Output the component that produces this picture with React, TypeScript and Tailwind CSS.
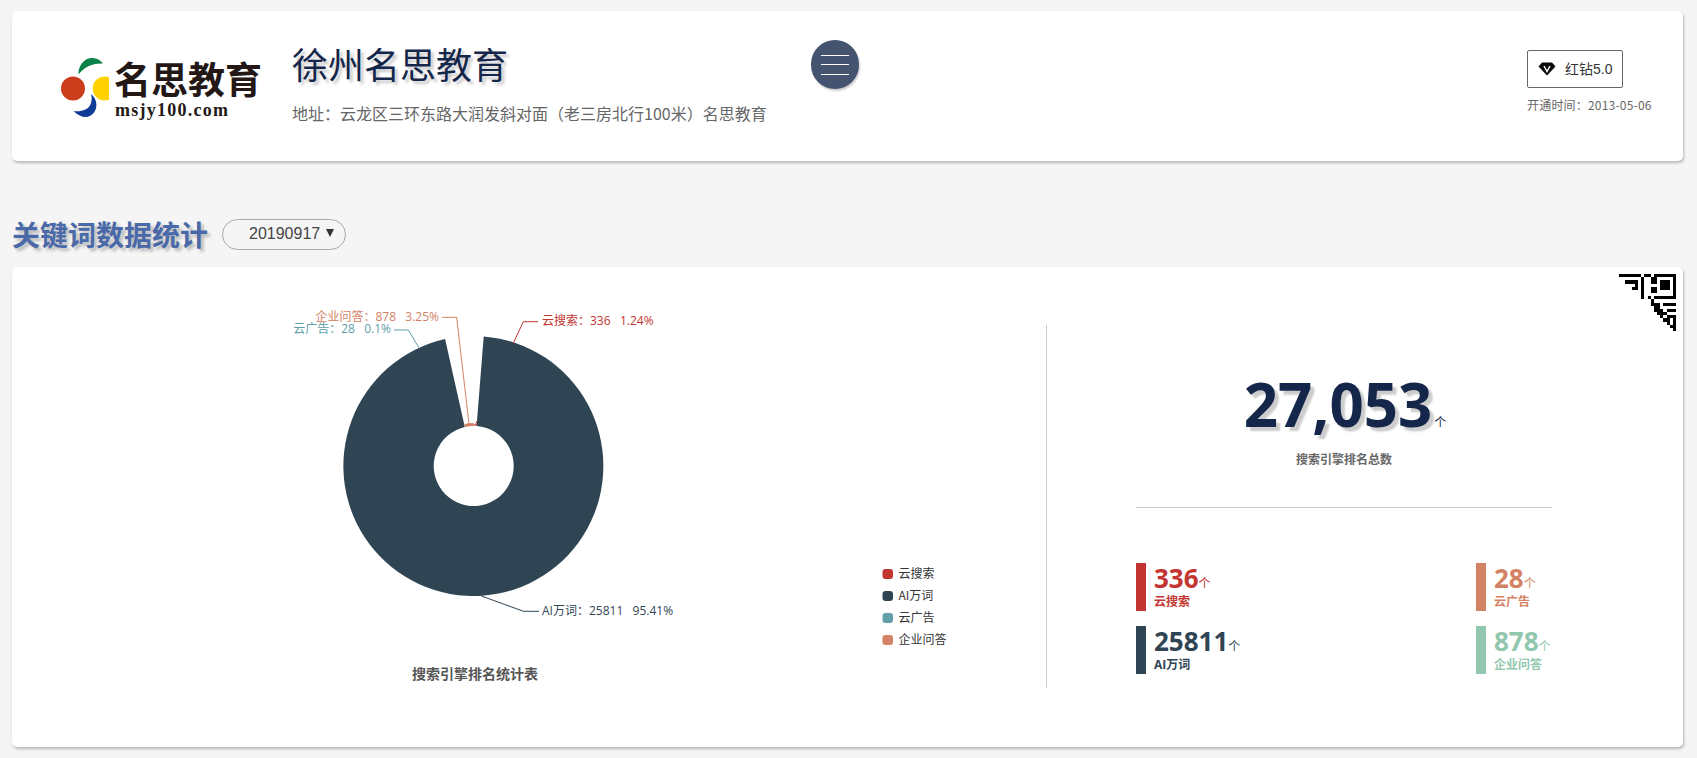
const cjk = '"Noto Sans CJK SC", "Open Sans", sans-serif';

function Logo() {
  return (
    <div className="relative w-[262px] h-[150px] shrink-0">
      <svg className="absolute left-[37px] top-0" width="60" height="150" viewBox="37 11 60 150">
        <path d="M66.5 74.5C66 66 72 58.5 79 58C84 57.8 88.5 60 91 63.5C82 63 73 66 66.5 74.5Z" fill="#0b8348" />
        <circle cx="61" cy="88.5" r="12" fill="#cc3d1c" />
        <circle cx="92.7" cy="88.5" r="12" fill="#ffd200" />
        <path d="M79 94C85 99 86 107 82 112.5C78 118 70 119.5 61.5 111C69 112 76 110 78.5 104.5C80 101 80 97 79 94Z" fill="#0f3a96" />
      </svg>
      <div className="absolute left-[102px] top-[45px] text-[37px] leading-[44px] font-bold text-[#231815] whitespace-nowrap" style={{ fontFamily: cjk }}>
        名思教育
      </div>
      <div className="absolute left-[103px] top-[89px] text-[18px] leading-[20px] font-bold text-[#231815] tracking-[1.25px] whitespace-nowrap" style={{ fontFamily: '"Liberation Serif", serif' }}>
        msjy100.com
      </div>
    </div>
  );
}

function Header() {
  return (
    <div className="h-[150px] bg-white rounded-[5px] shadow-[1px_2px_3px_rgba(0,0,0,0.25)] flex items-start">
      <Logo />
      <div className="w-[519px] ml-[18px] shrink-0 pt-[29px]" style={{ fontFamily: cjk }}>
        <div className="text-[36px] leading-[46px] text-[#14264a] [text-shadow:3px_3px_3px_#c8c8c8] whitespace-nowrap">徐州名思教育</div>
        <div className="text-[16px] leading-[24px] text-[#666] mt-[15px] whitespace-nowrap">地址：云龙区三环东路大润发斜对面（老三房北行100米）名思教育</div>
      </div>
      <div className="mt-[29px] w-[48px] h-[49px] rounded-full bg-[#44536f] shrink-0 flex flex-col items-center justify-center gap-[8.5px] shadow-[1px_2px_2px_rgba(0,0,0,0.2)]">
        <span className="block w-[28px] h-px bg-white" />
        <span className="block w-[28px] h-px bg-white" />
        <span className="block w-[28px] h-px bg-white" />
      </div>
      <div className="ml-auto mr-[30px] pt-[39px] w-[126px]">
        <div className="w-[96px] h-[38px] border border-[#666] rounded-[2px] flex items-center pl-[10px] gap-[9px]">
          <svg width="18" height="14" viewBox="0 0 18 14">
            <path d="M4 0.5H14L17.5 4.5L9 13.5L0.5 4.5Z" fill="#0a0a0a" />
            <path d="M6 4L9 9.5L12 4" fill="none" stroke="#fff" strokeWidth="1.4" />
          </svg>
          <span className="text-[14px] text-[#333] whitespace-nowrap" style={{ fontFamily: '"Liberation Sans", "Noto Sans CJK SC", sans-serif' }}>红钻5.0</span>
        </div>
        <div className="text-[12px] leading-[18px] text-[#666] mt-[8px] tracking-[0.2px] whitespace-nowrap" style={{ fontFamily: cjk }}>开通时间：2013-05-06</div>
      </div>
    </div>
  );
}

function SectionTitle() {
  return (
    <div className="h-[30px] mt-[58px] flex items-center">
      <div className="text-[28px] leading-[30px] font-bold text-[#4a69a8] [text-shadow:3px_3px_3px_#bbb] whitespace-nowrap" style={{ fontFamily: cjk }}>关键词数据统计</div>
      <div className="ml-[14px] w-[124px] h-[31px] border border-[#aaa] rounded-full flex items-center pl-[26px] text-[16px] text-[#444]" style={{ fontFamily: '"Liberation Sans", sans-serif' }}>
        <span>20190917</span>
        <svg className="ml-[6px] mb-[3px]" width="8" height="8" viewBox="0 0 8 8"><path d="M0 0H8L4 8Z" fill="#333" /></svg>
      </div>
    </div>
  );
}

const labelFont = { fontFamily: '"Open Sans", "Noto Sans CJK SC", sans-serif', fontSize: 12 };

function Chart() {
  const legend: [string, string, number][] = [
    ['云搜索', '#c23531', 570],
    ['AI万词', '#2f4554', 592],
    ['云广告', '#61a0a8', 614],
    ['企业问答', '#d48265', 636],
  ];
  return (
    <svg className="block shrink-0" width="1034" height="480" viewBox="12 268 1034 480">
      <path d="M483.7 337.4A130 130 0 1 1 445.1 340.1L464.8 428A40 40 0 1 0 476.6 427.1Z" fill="#2f4554" />
      <path d="M464.6 424.9A43 43 0 0 1 473.5 424V427A40 40 0 0 0 465.2 427.9Z" fill="#d48265" />
      <path d="M473.5 425L476.8 425.1L476.6 427.1H473.5Z" fill="#c23531" opacity="0.6" />
      <path d="M475.5 426L477 422" stroke="#c23531" fill="none" />
      <path d="M513.3 344.3L523.3 322.7H538" stroke="#c23531" fill="none" />
      <path d="M469 425L456.7 318.3H442" stroke="#d48265" fill="none" />
      <path d="M419.3 349.3L408.3 331H394" stroke="#61a0a8" fill="none" />
      <path d="M481.4 597L523.5 612.3H539" stroke="#2f4554" fill="none" />
      <text x="542" y="326" fill="#c23531" style={labelFont} xmlSpace="preserve">云搜索：336   1.24%</text>
      <text x="439" y="322" textAnchor="end" fill="#d48265" style={labelFont} xmlSpace="preserve">企业问答：878   3.25%</text>
      <text x="391" y="334" textAnchor="end" fill="#61a0a8" style={labelFont} xmlSpace="preserve">云广告：28   0.1%</text>
      <text x="542" y="616" fill="#2f4554" style={labelFont} xmlSpace="preserve">AI万词：25811   95.41%</text>
      <text x="475" y="680" textAnchor="middle" fill="#555" fontWeight="700" style={{ fontFamily: cjk, fontSize: 14 }}>搜索引擎排名统计表</text>
      {legend.map(([n, c, y]) => (
        <g key={n}>
          <rect x="882.5" y={y} width="10.5" height="10" rx="3" fill={c} />
          <text x="898.5" y={y + 9} fill="#333" style={{ fontFamily: cjk, fontSize: 12 }}>{n}</text>
        </g>
      ))}
    </svg>
  );
}

function Stat({ n, label, color }: { n: string; label: string; color: string }) {
  return (
    <div className="flex h-[48px]" style={{ color }}>
      <div className="w-[10px] h-[48px]" style={{ background: color }} />
      <div className="ml-[8px]" style={{ fontFamily: '"Open Sans", "Noto Sans CJK SC", sans-serif' }}>
        <div className="h-[30px] flex items-baseline whitespace-nowrap">
          <span className="text-[26px] leading-[30px] font-bold">{n}</span>
          <span className="text-[12px] leading-[12px]">个</span>
        </div>
        <div className="text-[12px] leading-[18px] font-bold whitespace-nowrap">{label}</div>
      </div>
    </div>
  );
}

function Stats() {
  return (
    <div className="flex-1 pl-[89px] pr-[131px]">
      <div className="pt-[107px] text-center">
        <div className="h-[60px] flex items-baseline justify-center text-[#14264a] pl-[2px]" style={{ fontFamily: '"Open Sans", "Noto Sans CJK SC", sans-serif' }}>
          <span className="text-[60px] leading-[60px] font-bold [text-shadow:4px_4px_2px_#ccc]">27,053</span>
          <span className="text-[12px] leading-[12px] ml-[2px]">个</span>
        </div>
        <div className="mt-[16px] text-[12px] leading-[18px] font-bold text-[#666]" style={{ fontFamily: cjk }}>搜索引擎排名总数</div>
      </div>
      <div className="mt-[39px] h-px bg-[#ccc]" />
      <div className="mt-[55px] grid grid-cols-[340px_1fr] gap-y-[15px]">
        <Stat n="336" label="云搜索" color="#c23531" />
        <Stat n="28" label="云广告" color="#d48265" />
        <Stat n="25811" label="AI万词" color="#2f4554" />
        <Stat n="878" label="企业问答" color="#91c7ae" />
      </div>
    </div>
  );
}

function QrCorner() {
  const m = 3.17;
  const rows = [
    '#######.##.#######',
    '.......#..##.....#',
    '.#####.#..##.###.#',
    '.#...#.#.....###.#',
    '.#####.#..##.###.#',
    '.......#..##.....#',
    '.......#.........#',
    '.......#.#.#######',
    '..........#.......',
    '..........###.####',
    '...........##.....',
    '...........###.###',
    '............###...',
    '.............#.###',
    '..............##.#',
    '...............#.#',
    '................##',
    '.................#',
  ];
  return (
    <svg className="absolute top-[7px] right-[7px]" width="57" height="57" viewBox="0 0 57 57" shapeRendering="crispEdges">
      {rows.flatMap((r, y) =>
        r.split('').map((c, x) =>
          c === '#' && x >= y ? <rect key={`${x}-${y}`} x={x * m} y={y * m} width={m + 0.1} height={m + 0.1} fill="#000" /> : null
        )
      )}
    </svg>
  );
}

export default function App() {
  return (
    <div className="min-h-screen bg-[#f5f5f5] pt-[11px] pl-[12px] pr-[14px]">
      <Header />
      <SectionTitle />
      <div className="relative mt-[18px] h-[480px] bg-white rounded-[5px] shadow-[1px_2px_3px_rgba(0,0,0,0.25)] flex items-start">
        <Chart />
        <div className="w-px h-[363px] mt-[58px] bg-[#ccc] shrink-0" />
        <Stats />
        <QrCorner />
      </div>
    </div>
  );
}
